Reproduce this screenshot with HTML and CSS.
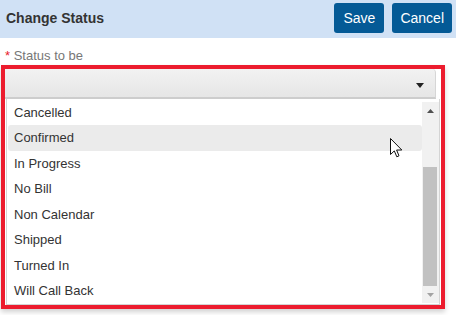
FILE: index.html
```html
<!DOCTYPE html>
<html>
<head>
<meta charset="utf-8">
<link rel="stylesheet" href="styles.css">
</head>
<body>
<div class="header">
  <div class="title">Change Status</div>
  <div class="actions">
    <button class="btn">Save</button>
    <button class="btn">Cancel</button>
  </div>
</div>
<div class="field">
  <div class="label"><span class="req">*</span> Status to be</div>
  <div class="focus-box">
    <div class="select">
      <svg class="caret" width="8" height="5" viewBox="0 0 8 5"><path d="M0 0H8L4 5Z" fill="#222"/></svg>
    </div>
    <div class="list">
      <div class="items">
        <div class="item">Cancelled</div>
        <div class="item hover">Confirmed</div>
        <div class="item">In Progress</div>
        <div class="item">No Bill</div>
        <div class="item">Non Calendar</div>
        <div class="item">Shipped</div>
        <div class="item">Turned In</div>
        <div class="item">Will Call Back</div>
      </div>
      <div class="scrollbar">
        <div class="sb-btn"><svg width="7" height="4" viewBox="0 0 7 4"><path d="M0 4H7L3.5 0Z" fill="#505050"/></svg></div>
        <div class="sb-track"><div class="sb-thumb"></div></div>
        <div class="sb-btn"><svg width="7" height="4" viewBox="0 0 7 4"><path d="M0 0H7L3.5 4Z" fill="#a3a3a3"/></svg></div>
      </div>
    </div>
  </div>
</div>
<svg class="cursor" width="13" height="20" viewBox="0 0 13 20"><path d="M0.5 0.5V16.5L4.3 12.9L6.8 18.8L9 17.8L6.6 12H11.8Z" fill="#fff" stroke="#111" stroke-width="1" stroke-linejoin="miter"/></svg>
</body>
</html>
```
FILE: styles.css
```css
html, body {
  margin: 0;
  padding: 0;
  background: #fff;
}
body {
  font-family: "Liberation Sans", Arial, sans-serif;
  color: #333;
  width: 456px;
  height: 315px;
  overflow: hidden;
  position: relative;
}
.header {
  height: 38px;
  box-sizing: border-box;
  background: #d0e1f5;
  display: flex;
  justify-content: space-between;
  align-items: flex-start;
  padding: 3px 4px 0 6px;
}
.title {
  height: 30px;
  line-height: 30px;
  font-weight: bold;
  font-size: 14px;
  color: #333;
}
.actions {
  display: flex;
  gap: 8px;
}
.btn {
  height: 30px;
  min-width: 50px;
  padding: 0 8px;
  border: none;
  border-radius: 3px;
  background: #045a96;
  color: #fff;
  font-family: "Liberation Sans", Arial, sans-serif;
  font-size: 14px;
}
.field {
  padding-top: 10px;
}
.label {
  font-size: 13px;
  line-height: 15px;
  color: #777;
  padding-left: 5px;
  margin-bottom: 2px;
}
.req {
  color: #e8202a;
}
.focus-box {
  margin-left: 1px;
  width: 444px;
  height: 244px;
  box-sizing: border-box;
  border: 4px solid #ec1c2e;
  box-shadow: 0 3px 5px rgba(0,0,0,0.18);
  display: flex;
  flex-direction: column;
}
.select {
  width: 431px;
  height: 30px;
  box-sizing: border-box;
  background: linear-gradient(#f2f2f2, #e6e6e6);
  border-bottom: 2px solid #cdcdcd;
  border-right: 1px solid #d6d6d6;
  border-radius: 0 4px 0 0;
  display: flex;
  align-items: center;
  justify-content: flex-end;
  padding-right: 11px;
}
.caret {
  display: block;
  margin-top: 4px;
}
.list {
  margin-left: 1px;
  width: 434px;
  height: 206px;
  box-sizing: border-box;
  border: 1px solid #d4d4d4;
  border-top: none;
  display: flex;
  background: #fff;
}
.items {
  flex: 1;
  padding-left: 1px;
  padding-top: 1px;
}
.item {
  height: 25.45px;
  line-height: 25px;
  font-size: 13px;
  color: #333;
  padding-left: 6px;
  border-radius: 3px;
}
.item.hover {
  background: #ebebeb;
}
.scrollbar {
  width: 17px;
  margin-top: 3px;
  margin-bottom: 1px;
  background: #f1f1f1;
  display: flex;
  flex-direction: column;
}
.sb-btn {
  height: 17px;
  display: flex;
  align-items: center;
  justify-content: center;
}
.sb-btn svg {
  display: block;
}
.sb-track {
  flex: 1;
  display: flex;
  flex-direction: column;
  justify-content: flex-end;
}
.sb-thumb {
  height: 119px;
  margin: 0 2px 0 1px;
  background: #c1c1c1;
}
.cursor {
  position: absolute;
  left: 390px;
  top: 138px;
}
```
